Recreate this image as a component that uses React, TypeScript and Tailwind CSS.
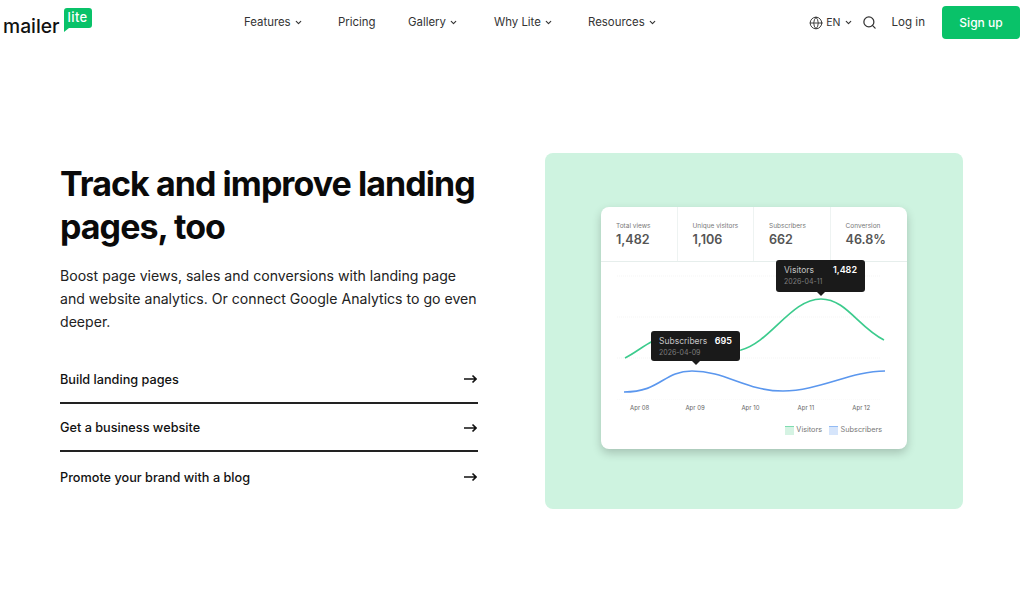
import React from 'react';
import { ChevronDown, Globe, Search } from 'lucide-react';

const navItems = [
  { label: 'Features', width: 'w-[94px]', caret: true },
  { label: 'Pricing', width: 'w-[70px]', caret: false },
  { label: 'Gallery', width: 'w-[86px]', caret: true },
  { label: 'Why Lite', width: 'w-[94px]', caret: true },
  { label: 'Resources', width: 'w-[90px]', caret: true },
];

const stats = [
  { label: 'Total views', value: '1,482' },
  { label: 'Unique visitors', value: '1,106' },
  { label: 'Subscribers', value: '662' },
  { label: 'Conversion', value: '46.8%' },
];

const links = ['Build landing pages', 'Get a business website', 'Promote your brand with a blog'];

const days = ['Apr 08', 'Apr 09', 'Apr 10', 'Apr 11', 'Apr 12'];

const Tooltip = ({ className, name, value, date }: { className: string; name: string; value: string; date: string }) => (
  <div className={`absolute w-[89px] bg-[#1a1a1a] rounded-[3px] pl-2 pr-[8px] pt-[4px] ${className}`}>
    <div className="flex justify-between text-[8.5px] leading-[12px]">
      <span className="text-[#c4c4c4]">{name}</span>
      <span className="text-white font-semibold text-[9px]">{value}</span>
    </div>
    <div className="text-[7px] leading-[11px] text-[#7d7d7d]">{date}</div>
    <div className="absolute left-1/2 -ml-1 -bottom-1 w-0 h-0 border-x-4 border-x-transparent border-t-4 border-t-[#1a1a1a]" />
  </div>
);

const Arrow = () => (
  <svg viewBox="0 0 13 10" className="w-[13px] h-[10px] mr-[1px]" fill="none" stroke="#111" strokeWidth="1.6">
    <path d="M0 5h12M8.5 1.5 12 5 8.5 8.5" />
  </svg>
);

const App = () => {
  return (
    <div className="w-[1024px] h-[603px] bg-white overflow-hidden font-['Inter',sans-serif]">
      <header className="h-[45px] flex items-center pl-[3px] pr-1">
        <div className="flex items-start w-[241px] h-[36px]">
          <span className="mt-[9px] text-[19.3px] leading-[25px] font-medium text-[#111]">mailer</span>
          <div className="relative ml-[4px] mt-[3px] w-[28px] h-[24px]">
            <svg viewBox="0 0 28 24" className="w-full h-full">
              <path d="M3 0h22a3 3 0 0 1 3 3v14a3 3 0 0 1-3 3H5l-5 4V3a3 3 0 0 1 3-3z" fill="#09c269" />
            </svg>
            <span className="absolute left-[4px] top-[2px] text-[13px] tracking-[0.03em] leading-[15px] font-medium text-white">lite</span>
          </div>
        </div>
        <nav className="flex items-center pt-px text-[#333]">
          {navItems.map(item => (
            <div key={item.label} className={`flex items-center text-[11.4px] ${item.width}`}>
              <span>{item.label}</span>
              {item.caret && <ChevronDown size={9} strokeWidth={3} className="ml-[3px]" />}
            </div>
          ))}
        </nav>
        <div className="ml-auto flex items-center text-[#333]">
          <Globe size={14} strokeWidth={1.6} />
          <span className="ml-[3px] text-[10.5px]">EN</span>
          <ChevronDown size={9} strokeWidth={3} className="ml-[4px]" />
          <Search size={15} strokeWidth={2} className="ml-[9px]" />
          <span className="ml-[14px] pt-px text-[11.6px]">Log in</span>
          <button className="ml-[17px] w-[78px] h-[33px] rounded-[4px] bg-[#09c269] text-white text-[12px] font-medium">Sign up</button>
        </div>
      </header>

      <main className="flex pl-[60px] pt-[108px]">
        <section className="w-[418px] pt-[9px]">
          <h1 className="text-[34px] leading-[43px] font-bold tracking-[-0.028em] text-[#0a0a0a]">Track and improve landing pages, too</h1>
          <p className="mt-[16px] text-[14.1px] leading-[23px] text-[#222]">
            Boost page views, sales and conversions with landing page and website analytics. Or connect Google Analytics to go even deeper.
          </p>
          <ul className="mt-[22px]">
            {links.map((link, index) => (
              <li key={link} className={`h-[48.5px] pt-[2px] flex items-center justify-between text-[12.7px] font-medium text-[#111] ${index < links.length - 1 ? 'border-b-2 border-[#222]' : ''}`}>
                {link}
                <Arrow />
              </li>
            ))}
          </ul>
        </section>

        <section className="ml-[67px] w-[418px] h-[356px] rounded-[8px] bg-[#cef3e0] pl-[56px] pt-[54px]">
          <div className="w-[306px] h-[242px] rounded-[8px] bg-white shadow-[0_4px_10px_rgba(0,0,0,0.2)]">
            <div className="h-[55px] grid grid-cols-4 border-b border-[#e6eeec]">
              {stats.map((stat, index) => (
                <div key={stat.label} className={`pl-[15px] pt-[15px] ${index < 3 ? 'border-r border-[#eef3f2]' : ''}`}>
                  <div className="text-[6.5px] leading-[9px] text-[#777]">{stat.label}</div>
                  <div className="mt-px text-[12.6px] leading-[16px] font-semibold text-[#555]">{stat.value}</div>
                </div>
              ))}
            </div>
            <div className="relative h-[138px]">
              <svg viewBox="0 0 306 138" className="w-full h-full">
                {[14, 55, 96, 138].map(y => (
                  <line key={y} x1="16" x2="279" y1={y} y2={y} stroke="#f0f0f0" strokeWidth="0.7" strokeDasharray="1 1" />
                ))}
                <path d="M24 96C34 91 42 84 52 79S110 92 140 88C170 80 190 37 220 37C245 37 258 66 283 78" fill="none" stroke="#3ccb8d" strokeWidth="1.7" />
                <path d="M23 130C60 130 62 109 91 109C125 109 145 129 182 129C218 129 250 109 284 109" fill="none" stroke="#5b97ee" strokeWidth="1.7" />
              </svg>
              <Tooltip className="left-[175px] top-[-2px] h-[32px]" name="Visitors" value="1,482" date="2026-04-11" />
              <Tooltip className="left-[50px] top-[69px] h-[30px]" name="Subscribers" value="695" date="2026-04-09" />
            </div>
            <div className="grid grid-cols-5 pl-[11px] pr-[18px] mt-[4px] text-center text-[6px] leading-[8px] text-[#666]">
              {days.map(day => <span key={day}>{day}</span>)}
            </div>
            <div className="flex justify-end items-center gap-[7px] pr-[25px] mt-[13px] text-[7.3px] leading-[10px] text-[#777]">
              <span className="flex items-center gap-[2.5px]"><i className="w-[9px] h-[9px] bg-[#d5f3e3] border-t border-[#7fdcb0]" />Visitors</span>
              <span className="flex items-center gap-[2.5px]"><i className="w-[9px] h-[9px] bg-[#d6e5fb] border-t border-[#93bbf4]" />Subscribers</span>
            </div>
          </div>
        </section>
      </main>
    </div>
  );
};

export default App;
